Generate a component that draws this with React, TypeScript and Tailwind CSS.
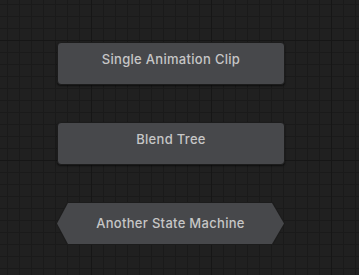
export default function App() {
  return (
    <div
      className="w-[359px] h-[275px] overflow-hidden bg-[#202020] bg-[linear-gradient(#161616_1px,transparent_1px),linear-gradient(90deg,#161616_1px,transparent_1px),linear-gradient(#1a1a1a_1px,transparent_1px),linear-gradient(90deg,#1a1a1a_1px,transparent_1px)] bg-[size:120px_120px,120px_120px,12px_12px,12px_12px] bg-[position:0_40px,-29px_0,0_4px,7px_0]"
      style={{ fontFamily: "Inter, 'Liberation Sans', Arial, sans-serif" }}
    >
      <div className="flex flex-col gap-[37px] pt-[42px] pl-[57px]">
        <div className="w-[228px] h-[43px] rounded-[4px] border border-[#1c1c1c] bg-[#47484b] shadow-[0_1px_2px_rgba(0,0,0,0.6)] flex justify-center pt-[7px]">
          <span className="text-[13px] font-medium tracking-[0.3px] text-[#c6c6c6]">Single Animation Clip</span>
        </div>
        <div className="w-[228px] h-[43px] rounded-[4px] border border-[#1c1c1c] bg-[#47484b] shadow-[0_1px_2px_rgba(0,0,0,0.6)] flex justify-center pt-[7px]">
          <span className="text-[13px] font-medium tracking-[0.3px] text-[#c6c6c6]">Blend Tree</span>
        </div>
        <div className="w-[229px] h-[43px] -ml-[1px] bg-[#1c1c1c] [clip-path:polygon(11px_0,calc(100%-12px)_0,100%_50%,calc(100%-12px)_100%,11px_100%,0_50%)] p-[1px]">
          <div className="w-full h-full bg-[#47484b] [clip-path:polygon(11px_0,calc(100%-12px)_0,100%_50%,calc(100%-12px)_100%,11px_100%,0_50%)] flex items-center justify-center pt-[1px]">
            <span className="text-[13px] font-medium tracking-[0.3px] text-[#c6c6c6]">Another State Machine</span>
          </div>
        </div>
      </div>
    </div>
  );
}
